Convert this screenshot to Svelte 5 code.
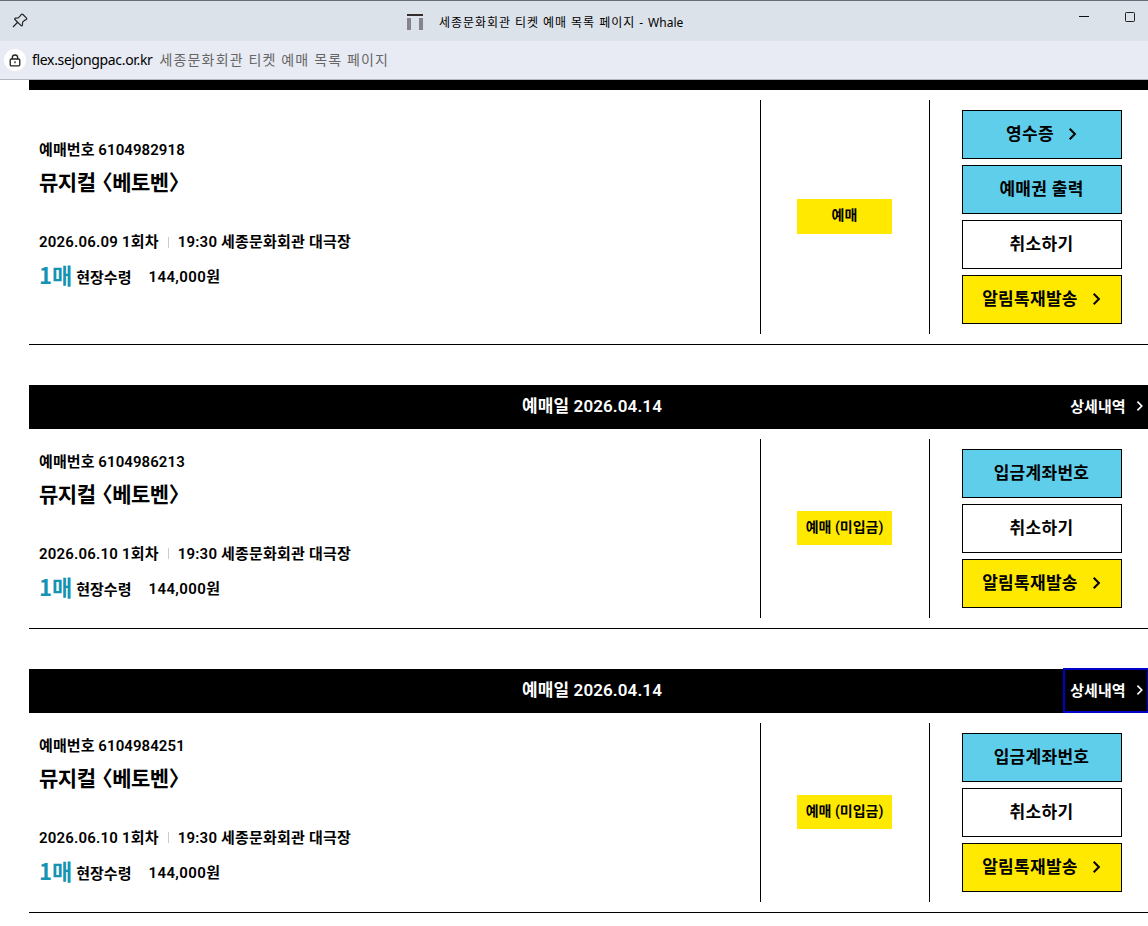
<script lang="ts">
  type Action = { label: string; tone: 'blue' | 'white' | 'yellow'; arrow?: boolean };
  type Booking = {
    bookedOn?: string;
    number: string;
    title: string;
    round: string;
    place: string;
    status: string;
    actions: Action[];
    focused?: boolean;
  };

  const cancel: Action = { label: '취소하기', tone: 'white' };
  const resend: Action = { label: '알림톡재발송', tone: 'yellow', arrow: true };
  const account: Action = { label: '입금계좌번호', tone: 'blue' };

  const bookings: Booking[] = [
    {
      number: '6104982918',
      title: '뮤지컬 〈베토벤〉',
      round: '2026.06.09 1회차',
      place: '19:30 세종문화회관 대극장',
      status: '예매',
      actions: [
        { label: '영수증', tone: 'blue', arrow: true },
        { label: '예매권 출력', tone: 'blue' },
        cancel,
        resend
      ]
    },
    {
      bookedOn: '2026.04.14',
      number: '6104986213',
      title: '뮤지컬 〈베토벤〉',
      round: '2026.06.10 1회차',
      place: '19:30 세종문화회관 대극장',
      status: '예매 (미입금)',
      actions: [account, cancel, resend]
    },
    {
      bookedOn: '2026.04.14',
      number: '6104984251',
      title: '뮤지컬 〈베토벤〉',
      round: '2026.06.10 1회차',
      place: '19:30 세종문화회관 대극장',
      status: '예매 (미입금)',
      actions: [account, cancel, resend],
      focused: true
    }
  ];
</script>

{#snippet chevron(height = 12)}
  <svg width={height * 0.75} {height} viewBox="0 0 9 12">
    <path d="M1.7 .8 6.9 6 1.7 11.2" fill="none" stroke="currentColor" stroke-width="2" />
  </svg>
{/snippet}

<div class="window">
  <header class="titlebar">
    <svg width="16" height="16" viewBox="0 0 16 16" fill="none" stroke="#222" stroke-width="1.2" stroke-linejoin="round">
      <path d="M9.3 1.5q.8-.7 1.6 0l3.4 3.4q.8.9 0 1.6l-2.1 1.1-1.6 1.6-.2 3.1q-.5 1-1.3.3L2.9 6.5q-.7-.9.3-1.3l3.1-.3 1.7-1.7zM5.4 9.5 1 14" />
    </svg>
    <div class="caption">
      <svg width="16" height="17" viewBox="0 0 16 17">
        <path fill="#332c2e" d="M0 0h16v2H0z" />
        <path fill="#858589" d="M0 4h4v12H0zM12 4h4v12h-4z" />
      </svg>
      <span>세종문화회관 티켓 예매 목록 페이지 - <span class="app">Whale</span></span>
    </div>
    <div class="controls">
      <svg width="10" height="10" viewBox="0 0 10 10"><path d="M0 4.5h10" stroke="#111" /></svg>
      <svg width="10" height="10" viewBox="0 0 10 10"><rect x=".5" y=".5" width="9" height="9" rx=".8" fill="none" stroke="#222" /></svg>
    </div>
  </header>

  <div class="address">
    <span class="lock">
      <svg width="12" height="13" viewBox="0 0 12 13" fill="none" stroke="#222" stroke-width="1.3">
        <rect x="1.2" y="5" width="9.6" height="6.8" rx="1.2" />
        <path d="M3.3 5V3.7a2.7 2.7 0 0 1 5.4 0V5M6 7.3v2" />
      </svg>
    </span>
    <span class="host">flex.sejongpac.or.kr</span>
    <span class="page-title">세종문화회관 티켓 예매 목록 페이지</span>
  </div>

  <main>
    <div class="list">
      {#each bookings as booking (booking.number)}
        <section class="booking">
          <div class="head" class:collapsed={!booking.bookedOn}>
            {#if booking.bookedOn}
              <h2>예매일 {booking.bookedOn}</h2>
              <button class="detail" class:focused={booking.focused}>상세내역 {@render chevron(10)}</button>
            {/if}
          </div>
          <div class="body">
            <div class="info">
              <p class="number">예매번호 {booking.number}</p>
              <h3>{booking.title}</h3>
              <p class="schedule"><span>{booking.round}</span><i></i><span>{booking.place}</span></p>
              <p class="ticket"><b>1매</b><span class="pickup">현장수령</span><span class="price">144,000원</span></p>
            </div>
            <div class="state"><span class:short={booking.status === '예매'}>{booking.status}</span></div>
            <div class="actions">
              {#each booking.actions as action}
                <button class={action.tone}>
                  <span>{action.label}</span>
                  {#if action.arrow}{@render chevron()}{/if}
                </button>
              {/each}
            </div>
          </div>
        </section>
      {/each}
    </div>
  </main>
</div>

<style>
  :global(body) { margin: 0; background: #fff; overflow: hidden; }
  .window {
    display: flex;
    flex-direction: column;
    height: 926px;
    overflow: hidden;
    color: #000;
    font-family: Roboto, 'Noto Sans CJK KR', sans-serif;
  }
  .titlebar {
    display: grid;
    grid-template-columns: 395px auto 1fr;
    align-items: center;
    flex: none;
    height: 41px;
    box-sizing: border-box;
    padding: 0 13px 0 12px;
    border-top: 1px solid #686b78;
    background: #dce2ea;
    font: 12px 'Noto Sans', 'Noto Sans CJK KR', sans-serif;
  }
  .caption { display: flex; align-items: center; gap: 16px; padding-top: 2px; letter-spacing: 0.95px; white-space: nowrap; }
  .app { letter-spacing: 0; }
  .controls { display: flex; justify-content: flex-end; gap: 36px; padding-bottom: 8px; }
  .address {
    display: flex;
    align-items: center;
    flex: none;
    height: 39px;
    box-sizing: border-box;
    padding-left: 4px;
    border-bottom: 1px solid #b4b6bb;
    background: #e8ebf3;
    font: 14px 'Noto Sans', 'Noto Sans CJK KR', sans-serif;
  }
  .lock { display: grid; place-items: center; width: 22px; height: 22px; border-radius: 50%; background: #fff; }
  .host { margin: 0 7px 0 6px; padding-bottom: 2px; letter-spacing: -0.33px; }
  .page-title { padding-bottom: 2px; color: #666; letter-spacing: 1.15px; }

  main { flex: 1; min-height: 0; overflow: hidden; padding-left: 29px; }
  .list { width: 1126px; }
  .booking { margin-bottom: 40px; border-bottom: 1px solid #000; }
  h2, h3, p { margin: 0; }
  button { font-family: inherit; cursor: pointer; }
  .head {
    display: grid;
    grid-template-columns: 1fr auto 1fr;
    align-items: start;
    height: 44px;
    background: #000;
    color: #fff;
  }
  .head.collapsed { height: 10px; }
  h2 { grid-column: 2; font-size: 17px; font-weight: 600; line-height: 42px; letter-spacing: 0.1px; }
  .detail {
    display: flex;
    align-items: center;
    justify-self: end;
    gap: 10px;
    height: 43px;
    margin-right: 7px;
    padding: 0 5px 2px 6px;
    border: 0;
    background: #000;
    color: #fff;
    font-size: 15px;
    font-weight: 600;
  }
  .detail.focused { outline: 2px solid #0000c8; outline-offset: -1px; }

  .body { display: flex; padding: 10px 0; font-weight: 600; }
  .info {
    display: flex;
    flex-direction: column;
    justify-content: center;
    width: 721px;
    padding-left: 10px;
    font-size: 15px;
  }
  .number { line-height: 30px; letter-spacing: 0.08px; }
  h3 { font-size: 21px; font-weight: 600; line-height: 36px; letter-spacing: -0.5px; word-spacing: 2px; font-feature-settings: 'halt'; }
  .schedule { display: flex; align-items: center; margin-top: 24px; line-height: 34px; letter-spacing: 0.2px; }
  .schedule i { width: 1px; height: 11px; margin: 0 9px; background: #ccc; }
  .ticket { display: flex; align-items: baseline; height: 40px; line-height: 30px; }
  .ticket b { color: #1593b3; font-family: 'Noto Sans CJK KR', sans-serif; font-size: 22px; font-weight: 600; }
  .pickup { position: relative; top: -1px; margin: 0 17px 0 4px; }
  .price { position: relative; top: -2px; letter-spacing: 0.4px; }
  .state {
    display: grid;
    place-items: center;
    width: 168px;
    border: solid #000;
    border-width: 0 1px;
  }
  .state span {
    width: 94px;
    height: 34px;
    margin: 0 2px 2px 0;
    padding-left: 1px;
    background: #ffe900;
    font-size: 14px;
    line-height: 32px;
    text-align: center;
    white-space: nowrap;
  }
  .state .short { height: 35px; }
  .actions { display: flex; flex-direction: column; gap: 6px; padding: 10px 0 10px 32px; }
  .actions button {
    display: flex;
    align-items: center;
    justify-content: center;
    gap: 14px;
    width: 160px;
    height: 49px;
    padding: 0 1px 1px 0;
    border: 1px solid #000;
    background: #fff;
    color: #000;
    font-size: 17px;
    font-weight: 600;
    letter-spacing: 0.3px;
  }
  .actions button span { padding-bottom: 3px; }
  .actions .blue { background: #5fceeb; }
  .actions .yellow { background: #ffe900; }
</style>
